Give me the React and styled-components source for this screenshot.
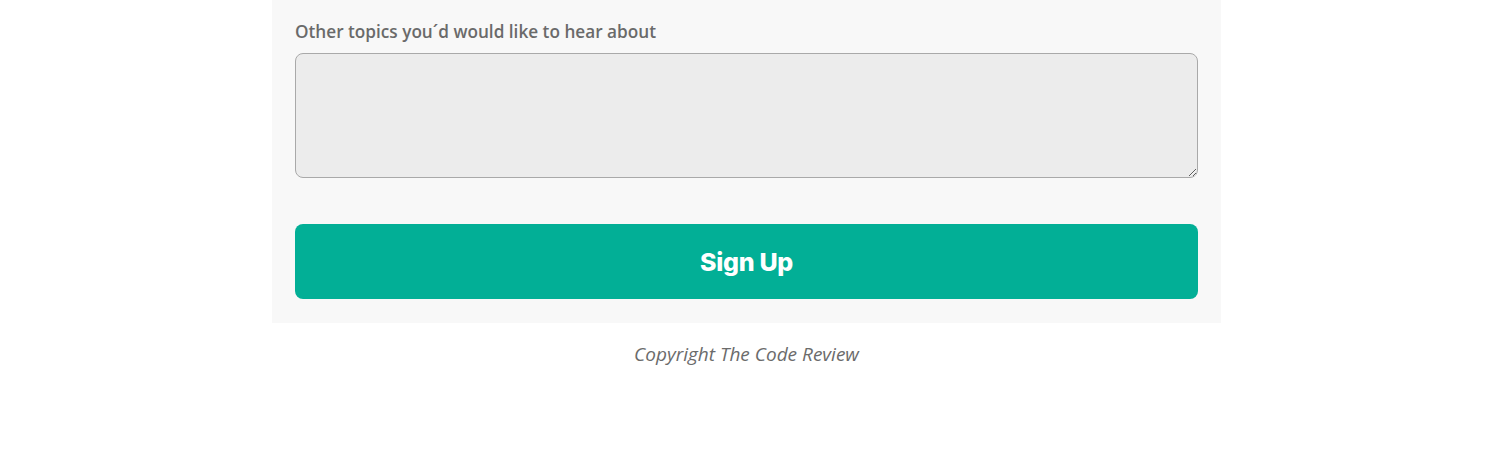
import React from "react";
import styled, { createGlobalStyle } from "styled-components";

const Global = createGlobalStyle`
  html, body { margin: 0; padding: 0; background: #ffffff; }
  body { font-family: "Open Sans", "Liberation Sans", sans-serif; }
`;

const Page = styled.div`
  width: 949px;
  margin-left: calc(50% - 481px);
  display: flex;
  flex-direction: column;
`;

const Card = styled.form`
  background: #f8f8f8;
  padding: 20px 23px 24px;
  display: flex;
  flex-direction: column;
`;

const Label = styled.label`
  font-size: 17.2px;
  line-height: 24px;
  font-weight: 600;
  color: #6a6a6a;
  margin-bottom: 9px;
`;

const TextArea = styled.textarea`
  box-sizing: border-box;
  height: 125px;
  width: 100%;
  background: #ececec;
  border: 1px solid #a9a9a9;
  border-radius: 8px;
  resize: vertical;
  font-family: inherit;
  margin: 0;
`;

const Button = styled.button`
  margin-top: 46px;
  height: 75px;
  border: none;
  border-radius: 8px;
  background: #02af96;
  color: #ffffff;
  font-family: "Inter", "Open Sans", sans-serif;
  font-weight: 800;
  font-size: 25px;
  letter-spacing: -0.3px;
  cursor: pointer;
`;

const Copyright = styled.p`
  margin: 19px 0 0;
  text-align: center;
  font-style: italic;
  font-size: 19px;
  line-height: 24px;
  color: #6b6b6b;
`;

export default function App() {
  return (
    <>
      <Global />
      <Page>
        <Card onSubmit={(e) => e.preventDefault()}>
          <Label htmlFor="topics">Other topics you´d would like to hear about</Label>
          <TextArea id="topics" />
          <Button type="submit">Sign Up</Button>
        </Card>
        <Copyright>Copyright The Code Review</Copyright>
      </Page>
    </>
  );
}
